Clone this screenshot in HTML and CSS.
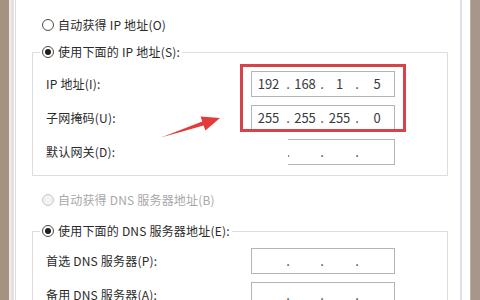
FILE: index.html
```html
<!DOCTYPE html>
<html lang="zh-CN">
  <head>
    <meta charset="UTF-8" />
    <title>Internet 协议版本 4 (TCP/IPv4) 属性</title>
    <link rel="stylesheet" href="styles.css">
  </head>

  <body>
    <div class="frame-left"></div>

    <div class="dialog">
      <label class="option">
        <input type="radio" name="ip" class="radio" />
        <span>自动获得 IP 地址(O)</span>
      </label>

      <fieldset class="group">
        <legend class="option">
          <input type="radio" name="ip" class="radio" checked />
          <span>使用下面的 IP 地址(S):</span>
        </legend>
        <div class="row">
          <span class="label">IP 地址(I):</span>
          <div class="ip">
            <span class="oct">192</span><span class="dot">.</span><span class="oct">168</span><span class="dot">.</span><span class="oct">1</span><span class="dot">.</span><span class="oct">5</span>
          </div>
        </div>
        <div class="row">
          <span class="label">子网掩码(U):</span>
          <div class="ip">
            <span class="oct">255</span><span class="dot">.</span><span class="oct">255</span><span class="dot">.</span><span class="oct">255</span><span class="dot">.</span><span class="oct">0</span>
          </div>
        </div>
        <div class="row">
          <span class="label">默认网关(D):</span>
          <div class="ip ip-cut">
            <span class="oct"></span><span class="dot">.</span><span class="oct"></span><span class="dot">.</span><span class="oct"></span><span class="dot">.</span><span class="oct"></span>
          </div>
        </div>
      </fieldset>

      <label class="option option-dns disabled">
        <input type="radio" name="dns" class="radio" disabled />
        <span>自动获得 DNS 服务器地址(B)</span>
      </label>

      <fieldset class="group group-dns">
        <legend class="option">
          <input type="radio" name="dns" class="radio" checked />
          <span>使用下面的 DNS 服务器地址(E):</span>
        </legend>
        <div class="row">
          <span class="label">首选 DNS 服务器(P):</span>
          <div class="ip">
            <span class="oct"></span><span class="dot">.</span><span class="oct"></span><span class="dot">.</span><span class="oct"></span><span class="dot">.</span><span class="oct"></span>
          </div>
        </div>
        <div class="row">
          <span class="label">备用 DNS 服务器(A):</span>
          <div class="ip">
            <span class="oct"></span><span class="dot">.</span><span class="oct"></span><span class="dot">.</span><span class="oct"></span><span class="dot">.</span><span class="oct"></span>
          </div>
        </div>
      </fieldset>
    </div>

    <div class="frame-right"></div>

    <!-- annotation -->
    <div class="mark"></div>
    <svg class="arrow" width="480" height="300" viewBox="0 0 480 300">
      <polygon points="161,137.5 202.3,121.6 200.6,116.6 220,118 205.4,130.6 203.6,125.6" fill="#e33a3c" />
    </svg>
  </body>
</html>
```

FILE: styles.css
```css
* {
  margin: 0;
  padding: 0;
  box-sizing: border-box;
}
body {
  position: relative;
  display: flex;
  height: 300px;
  overflow: hidden;
  background: #fff;
  color: #2a2a2a;
  font-family: "Noto Sans CJK SC", "Open Sans", sans-serif;
  font-size: 12px;
  line-height: 20px;
  letter-spacing: 0.2px;
}

.frame-left {
  flex: 0 0 16px;
  background: linear-gradient(to right, #a6937f 0 9px, #f3ecec 9px 11px, #e6dfe3 11px 14px, #fff 14px 15px, #dcdce0 15px 16px);
}
.frame-right {
  flex: 0 0 20px;
  background: linear-gradient(to right, #dbe1e6 0 2px, #fff 2px 10px, #bcaea4 10px 11px, #a8968a 11px);
}

.dialog {
  flex: 1;
  padding-top: 15px;
}

.option {
  display: flex;
  align-items: center;
  gap: 4px;
  height: 20px;
  padding-left: 26px;
}
.option-dns {
  margin-top: 14px;
}
.disabled {
  color: #a8a8a8;
}

.radio {
  appearance: none;
  display: grid;
  place-items: center;
  width: 12px;
  height: 12px;
  border: 1px solid #4a4a4a;
  border-radius: 50%;
  background: #fff;
}
.radio:checked::after {
  content: "";
  width: 6px;
  height: 6px;
  border-radius: 50%;
  background: #1e1e1e;
}
.radio:disabled {
  border-color: #c8c8c8;
  background: #f2f2f2;
}

.group {
  margin: 8px 12px 0 16px;
  padding: 10px 0 10px 13px;
  border: 1px solid #dedede;
  min-inline-size: 0;
}
.group-dns {
  margin-top: 12px;
  padding-top: 8px;
}
.group legend {
  height: 18px;
  padding: 0 2px;
  margin-left: -6px;
}

.row {
  display: flex;
  align-items: center;
  height: 26px;
  margin-bottom: 8px;
}
.row:last-child {
  margin-bottom: 0;
}
.label {
  width: 205px;
}

.ip {
  position: relative;
  display: flex;
  align-items: center;
  width: 144px;
  height: 26px;
  border: 1px solid #b4b4b4;
  font-size: 13px;
  letter-spacing: 0;
  color: #3a3a3a;
}
.oct {
  width: 28px;
  text-align: center;
}
.oct:first-child {
  width: 33px;
}
.oct:nth-child(5) {
  width: 29px;
}
.oct:last-child {
  flex: 1;
}
.dot {
  width: 6px;
  text-align: center;
}
/* left part of the gateway box is wiped out in the picture */
.ip-cut::before {
  content: "";
  position: absolute;
  left: -1px;
  top: -1px;
  bottom: -1px;
  width: 37px;
  background: #fff;
}

.mark {
  position: absolute;
  left: 240px;
  top: 64px;
  width: 166px;
  height: 68px;
  border: 3px solid #d8434b;
}
.arrow {
  position: absolute;
  left: 0;
  top: 0;
}
```
